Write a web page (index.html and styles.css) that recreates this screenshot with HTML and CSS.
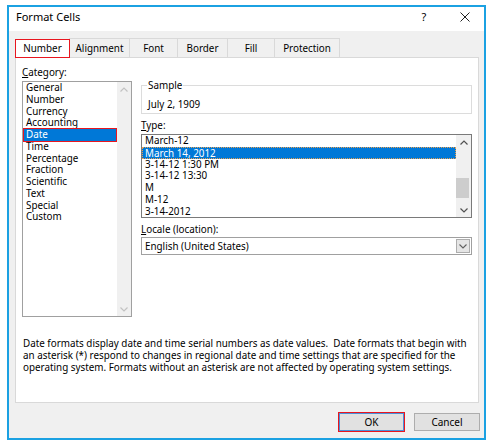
FILE: index.html
```html
<!DOCTYPE html>
<html lang="en">
<head>
    <meta charset="UTF-8">
    <title>Format Cells</title>
    <link rel="stylesheet" href="styles.css">
</head>
<body>
    <div class="window">
        <div class="titlebar">
            <span class="title">Format Cells</span>
            <span class="help">?</span>
            <span class="close">
                <svg width="10" height="10" viewBox="0 0 10 10"><path d="M0.5 0.5 L9.5 9.5 M9.5 0.5 L0.5 9.5" stroke="#222" stroke-width="1" fill="none"/></svg>
            </span>
        </div>

        <!-- tab strip -->
        <div class="tabs">
            <div class="tab active">Number</div>
            <div class="tab">Alignment</div>
            <div class="tab">Font</div>
            <div class="tab">Border</div>
            <div class="tab">Fill</div>
            <div class="tab">Protection</div>
        </div>

        <div class="panel">
            <div class="panel-top">
                <div class="col-left">
                    <div class="label"><u>C</u>ategory:</div>
                    <div class="listbox category">
                        <ul class="items">
                            <li>General</li>
                            <li>Number</li>
                            <li>Currency</li>
                            <li>Accounting</li>
                            <li class="selected marked">Date</li>
                            <li>Time</li>
                            <li>Percentage</li>
                            <li>Fraction</li>
                            <li>Scientific</li>
                            <li>Text</li>
                            <li>Special</li>
                            <li>Custom</li>
                        </ul>
                        <div class="scrollbar disabled">
                            <span class="arrow"><svg width="8" height="5" viewBox="0 0 8 5"><polyline points="0.5,4.5 4,1 7.5,4.5" fill="none" stroke="#c2c2c2" stroke-width="1.2"/></svg></span>
                            <span class="track"></span>
                            <span class="arrow"><svg width="8" height="5" viewBox="0 0 8 5"><polyline points="0.5,0.5 4,4 7.5,0.5" fill="none" stroke="#c2c2c2" stroke-width="1.2"/></svg></span>
                        </div>
                    </div>
                </div>

                <div class="col-right">
                    <fieldset class="sample">
                        <legend>Sample</legend>
                        <div class="sample-value">July 2, 1909</div>
                    </fieldset>

                    <div class="label gap"><u>T</u>ype:</div>
                    <div class="listbox type">
                        <ul class="items">
                            <li>March-12</li>
                            <li class="selected focus">March 14, 2012</li>
                            <li>3-14-12 1:30 PM</li>
                            <li>3-14-12 13:30</li>
                            <li>M</li>
                            <li>M-12</li>
                            <li>3-14-2012</li>
                        </ul>
                        <div class="scrollbar">
                            <span class="arrow"><svg width="8" height="5" viewBox="0 0 8 5"><polyline points="0.5,4.5 4,1 7.5,4.5" fill="none" stroke="#505050" stroke-width="1.2"/></svg></span>
                            <span class="track"><span class="thumb"></span></span>
                            <span class="arrow"><svg width="8" height="5" viewBox="0 0 8 5"><polyline points="0.5,0.5 4,4 7.5,0.5" fill="none" stroke="#505050" stroke-width="1.2"/></svg></span>
                        </div>
                    </div>

                    <div class="label gap"><u>L</u>ocale (location):</div>
                    <div class="combo">
                        <span class="combo-text">English (United States)</span>
                        <span class="combo-btn"><svg width="8" height="5" viewBox="0 0 8 5"><polyline points="0.5,0.5 4,4 7.5,0.5" fill="none" stroke="#606060" stroke-width="1.1"/></svg></span>
                    </div>
                </div>
            </div>

            <p class="desc">Date formats display date and time serial numbers as date values.&nbsp; Date formats that begin with an asterisk (*) respond to changes in regional date and time settings that are specified for the operating system. Formats without an asterisk are not affected by operating system settings.</p>
        </div>

        <div class="buttons">
            <button class="btn ok">OK</button>
            <button class="btn">Cancel</button>
        </div>
    </div>
</body>
</html>
```

FILE: styles.css
```css
body {
    margin: 0;
    background: #fff;
    font-family: "Segoe UI", "Noto Sans", sans-serif;
    font-size: 9.85px;
    color: #000;
}
.window {
    box-sizing: border-box;
    width: 479px;
    height: 435px;
    margin: 5px 0 0 7px;
    border: 2px solid #1ba1e2;
    background: #f0f0f0;
    display: flex;
    flex-direction: column;
}
.titlebar {
    height: 24px;
    background: #fff;
    display: flex;
    align-items: flex-start;
    line-height: 20px;
    padding-left: 7px;
}
.title {
    font-size: 11px;
    flex: 1;
}
.help {
    font-size: 11px;
    width: 10px;
    text-align: center;
    margin-right: 31px;
}
.close {
    width: 10px;
    height: 20px;
    display: flex;
    align-items: center;
    margin-right: 14px;
}

/* tabs */
.tabs {
    display: flex;
    margin: 7px 0 0 6px;
    height: 19px;
}
.tab {
    box-sizing: border-box;
    height: 19px;
    line-height: 18px;
    border: 1px solid #d9d9d9;
    border-bottom: none;
    margin-left: -1px;
    text-align: center;
    background: #f0f0f0;
}
.tab:nth-child(1) { width: 55px; margin-left: 0; }
.tab:nth-child(2) { width: 61px; }
.tab:nth-child(3) { width: 49px; }
.tab:nth-child(4) { width: 51px; }
.tab:nth-child(5) { width: 48px; }
.tab:nth-child(6) { width: 66px; }
.tab.active {
    background: #fff;
    border: 1px solid #e8161f;
    height: 19px;
    position: relative;
    z-index: 1;
    margin-top: 1px;
    line-height: 16px;
}

/* panel */
.panel {
    box-sizing: border-box;
    height: 346px;
    margin: 0 5px 0 6px;
    background: #fff;
    border: 1px solid #d9d9d9;
    padding: 8px 6px 0 6px;
}
.panel-top {
    display: flex;
}
.label {
    line-height: 12px;
    height: 12px;
}
.label.gap {
    margin-top: 5px;
}
.col-left {
    width: 110px;
}
.col-right {
    margin-left: 9px;
    width: 331px;
}
.listbox {
    box-sizing: border-box;
    border: 1px solid #a0a0a0;
    display: flex;
    margin-top: 3px;
    background: #fff;
}
.listbox.category {
    height: 236px;
}
.listbox.type {
    height: 84px;
    border-color: #7a7a7a;
}
.items {
    list-style: none;
    margin: 0;
    padding: 0;
    flex: 1;
    overflow: hidden;
}
.category .items li {
    line-height: 11.75px;
    height: 11.75px;
    padding-left: 3px;
    margin-right: 1px;
}
.type .items li {
    line-height: 11.8px;
    height: 11.8px;
    padding-left: 3px;
}
.items li.selected {
    background: #0078d7;
    color: #fff;
}
.category .items li.marked {
    margin-left: 1px;
    padding-left: 2px;
    outline: 1px solid #e8161f;
    outline-offset: 0;
}
.type .items li.focus {
    box-sizing: border-box;
    border: 1px dotted #e8a050;
    padding-left: 2px;
    line-height: 10px;
}
.scrollbar {
    width: 14px;
    background: #f0f0f0;
    display: flex;
    flex-direction: column;
    align-items: center;
}
.type .scrollbar {
    width: 15px;
}
.arrow {
    height: 14px;
    display: flex;
    align-items: center;
    justify-content: center;
}
.track {
    flex: 1;
    width: 100%;
    position: relative;
}
.thumb {
    position: absolute;
    left: 0;
    right: 2px;
    top: 29px;
    height: 20px;
    background: #cdcdcd;
}

/* sample group */
.sample {
    margin: 14px 0 0 0;
    padding: 0 5px 3px 6px;
    border: 1px solid #dcdcdc;
    min-width: 0;
}
.sample legend {
    padding: 0 1px;
    margin-left: -1px;
    line-height: 10px;
}
.sample-value {
    margin-top: 8px;
    line-height: 12px;
}

/* locale combo */
.combo {
    box-sizing: border-box;
    height: 18px;
    margin-top: 2px;
    border: 1px solid #a0a0a0;
    display: flex;
    align-items: stretch;
}
.combo-text {
    flex: 1;
    line-height: 16px;
    padding-left: 3px;
}
.combo-btn {
    width: 14px;
    margin: 1px;
    background: #e5e5e5;
    border: 1px solid #adadad;
    display: flex;
    align-items: center;
    justify-content: center;
    box-sizing: border-box;
}

.desc {
    margin: 20px 0 0 1px;
    line-height: 12px;
    width: 450px;
}

/* dialog buttons */
.buttons {
    display: flex;
    justify-content: flex-end;
    gap: 10px;
    margin-top: 10px;
    padding-right: 4px;
}
.btn {
    box-sizing: border-box;
    width: 66px;
    height: 18px;
    padding: 0;
    font-family: inherit;
    font-size: 10px;
    background: #e1e1e1;
    border: 1px solid #adadad;
    color: #000;
}
.btn.ok {
    width: 65px;
    border: 1px solid #4a90d9;
    outline: 1px solid #e8161f;
    outline-offset: 0;
}
```
